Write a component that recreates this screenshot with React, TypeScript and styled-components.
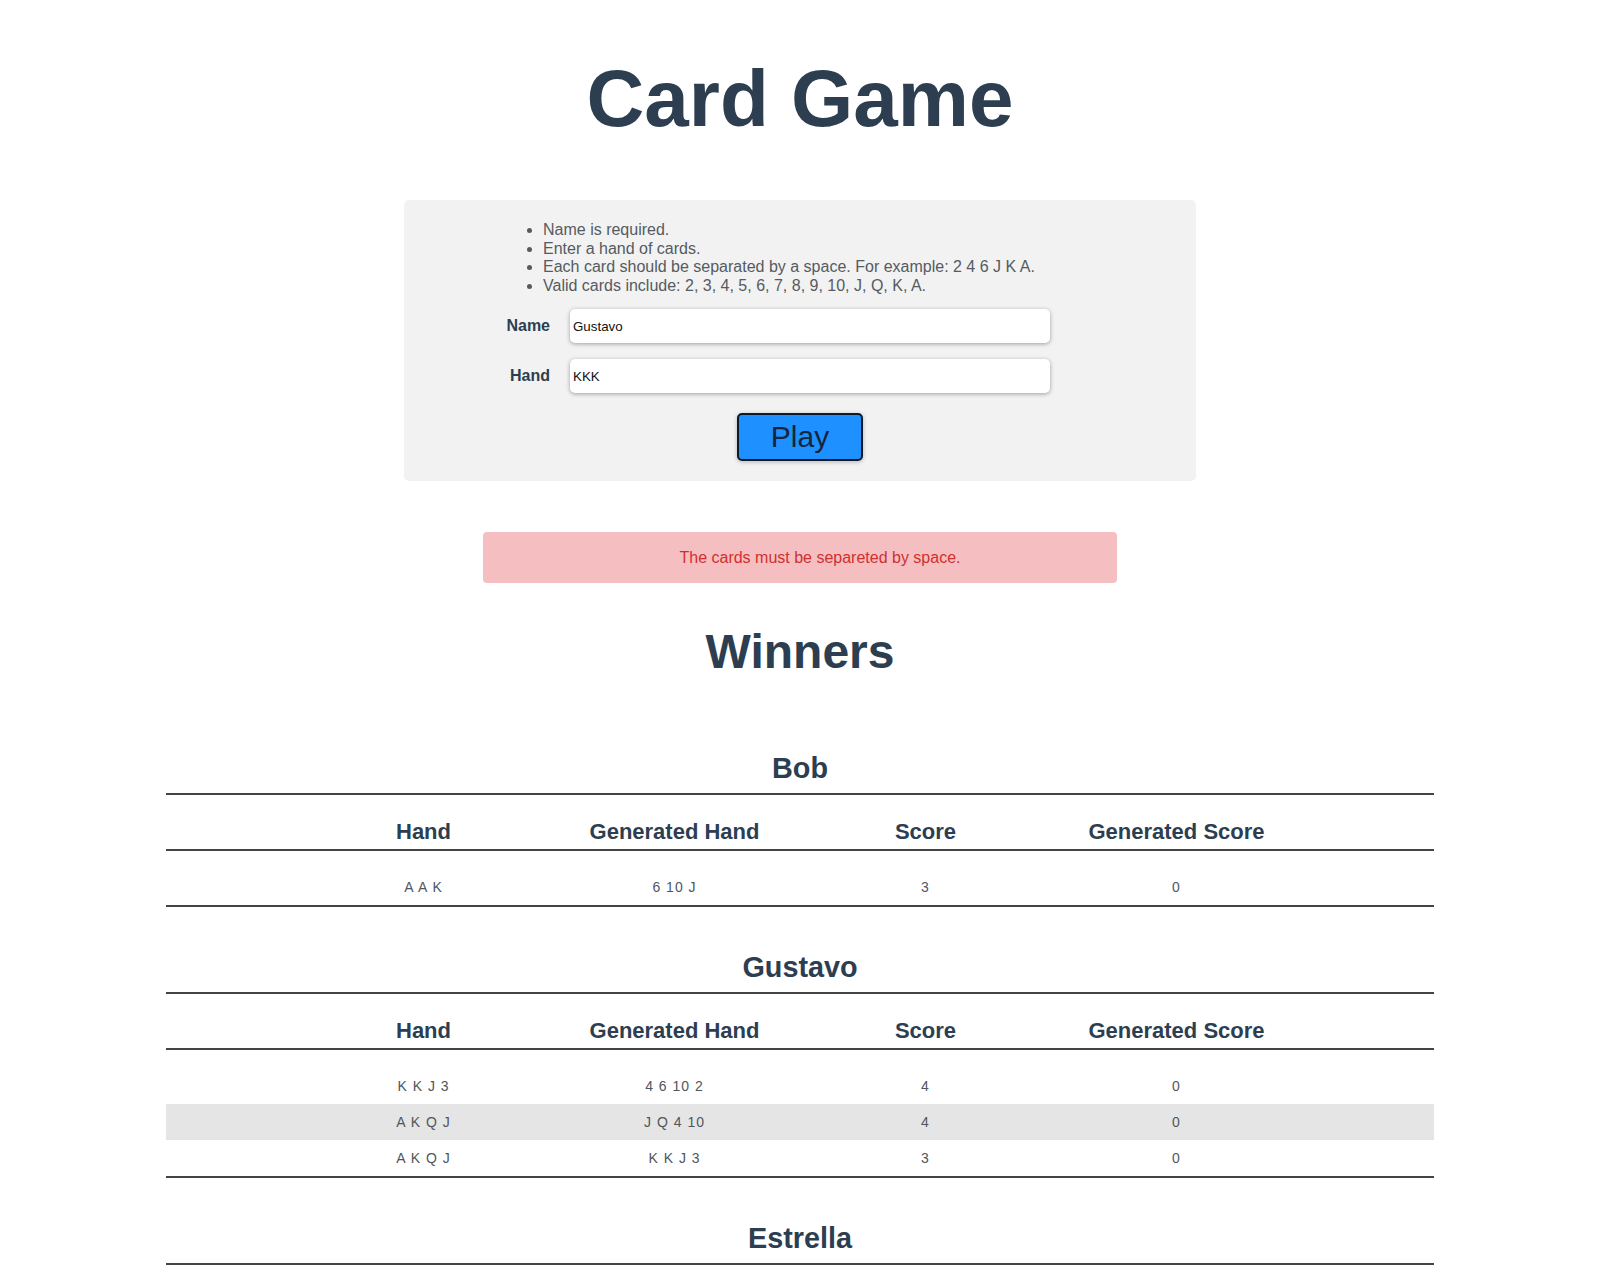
import React from "react";
import styled, { createGlobalStyle } from "styled-components";

const GlobalStyle = createGlobalStyle`
  html, body {
    margin: 0;
    padding: 0;
    background: #ffffff;
  }
  body {
    font-family: "Liberation Sans", Arial, Helvetica, sans-serif;
    color: #2c3e50;
    -webkit-font-smoothing: antialiased;
  }
`;

const Page = styled.div`
  display: flex;
  flex-direction: column;
  align-items: center;
  text-align: center;
  padding-bottom: 60px;
`;

const Title = styled.h1`
  margin: 53px 0 0;
  font-size: 80px;
  line-height: 92px;
  font-weight: 700;
  color: #2c3e50;
`;

const FormCard = styled.form`
  margin-top: 55px;
  width: 792px;
  box-sizing: border-box;
  padding: 21px 100px 20px;
  background: #f2f2f2;
  border-radius: 5px;
  display: flex;
  flex-direction: column;
  align-items: stretch;
  text-align: left;
`;

const Rules = styled.ul`
  margin: 0 0 14px;
  padding-left: 39px;
  color: #555b61;
  font-size: 16px;
`;

const Rule = styled.li`
  line-height: 18.5px;
`;

const Field = styled.div<{ $gapTop?: number }>`
  display: grid;
  grid-template-columns: 46px 480px;
  column-gap: 20px;
  align-items: center;
  margin-top: ${(p) => p.$gapTop ?? 0}px;
`;

const Label = styled.label`
  text-align: right;
  font-size: 16px;
  font-weight: 700;
  color: #2c3e50;
`;

const Input = styled.input`
  height: 34px;
  box-sizing: border-box;
  border: none;
  border-radius: 5px;
  background: #ffffff;
  box-shadow: 0 1px 4px rgba(0, 0, 0, 0.35);
  padding: 0 3px;
  font-family: "Liberation Sans", Arial, sans-serif;
  font-size: 13.33px;
  color: #111;
  outline: none;
`;

const PlayButton = styled.button`
  align-self: center;
  margin-top: 20px;
  height: 48px;
  box-sizing: border-box;
  padding: 0 32px;
  background: #1e90ff;
  border: 2px solid #0c1a2a;
  border-radius: 5px;
  box-shadow: 0 1px 4px rgba(0, 0, 0, 0.25);
  font-family: "Liberation Sans", Arial, sans-serif;
  font-size: 30px;
  line-height: 34px;
  color: #14263b;
  cursor: pointer;
`;

const ErrorBox = styled.div`
  margin-top: 51px;
  width: 634px;
  background: #f5bfc1;
  border-radius: 4px;
`;

const ErrorList = styled.ul`
  margin: 16px 0;
  padding-left: 40px;
  list-style: none;
`;

const ErrorItem = styled.li`
  font-size: 16px;
  line-height: 19px;
  color: #d0302f;
`;

const SectionTitle = styled.h1`
  margin: 41px 0 0;
  font-size: 48px;
  line-height: 55px;
  font-weight: 700;
  color: #2c3e50;
`;

const Player = styled.section<{ $first?: boolean }>`
  width: 1268px;
  display: flex;
  flex-direction: column;
  margin-top: ${(p) => (p.$first ? 73 : 44)}px;
`;

const PlayerName = styled.h2`
  margin: 0 0 8px;
  font-size: 28.8px;
  line-height: 33px;
  font-weight: 700;
  color: #2c3e50;
`;

const Table = styled.div`
  border-top: 2px solid #444;
  border-bottom: 2px solid #444;
`;

const HeadRow = styled.div`
  display: grid;
  grid-template-columns: repeat(4, 251px);
  justify-content: center;
  padding: 24px 0 5px;
  border-bottom: 2px solid #444;
`;

const HeadCell = styled.div`
  font-size: 22px;
  line-height: 25px;
  font-weight: 700;
  color: #2c3e50;
`;

const Body = styled.div`
  padding-top: 18px;
`;

const Row = styled.div`
  display: grid;
  grid-template-columns: repeat(4, 251px);
  justify-content: center;
  padding: 10px 0;
  &:nth-child(even) {
    background: #e5e5e5;
  }
`;

const Cell = styled.div`
  font-size: 14px;
  line-height: 16px;
  letter-spacing: 1px;
  color: #4f5660;
`;

type Game = { hand: string; generated: string; score: number; genScore: number };

const players: { name: string; games: Game[] }[] = [
  { name: "Bob", games: [{ hand: "A A K", generated: "6 10 J", score: 3, genScore: 0 }] },
  {
    name: "Gustavo",
    games: [
      { hand: "K K J 3", generated: "4 6 10 2", score: 4, genScore: 0 },
      { hand: "A K Q J", generated: "J Q 4 10", score: 4, genScore: 0 },
      { hand: "A K Q J", generated: "K K J 3", score: 3, genScore: 0 },
    ],
  },
  {
    name: "Estrella",
    games: [
      { hand: "Q Q 2", generated: "5 9 A", score: 2, genScore: 1 },
      { hand: "10 10 J", generated: "3 7 K", score: 2, genScore: 0 },
    ],
  },
];

export default function App() {
  return (
    <>
      <GlobalStyle />
      <Page>
        <Title>Card Game</Title>
        <FormCard onSubmit={(e) => e.preventDefault()}>
          <Rules>
            <Rule>Name is required.</Rule>
            <Rule>Enter a hand of cards.</Rule>
            <Rule>Each card should be separated by a space. For example: 2 4 6 J K A.</Rule>
            <Rule>Valid cards include: 2, 3, 4, 5, 6, 7, 8, 9, 10, J, Q, K, A.</Rule>
          </Rules>
          <Field>
            <Label htmlFor="name">Name</Label>
            <Input id="name" defaultValue="Gustavo" />
          </Field>
          <Field $gapTop={16}>
            <Label htmlFor="hand">Hand</Label>
            <Input id="hand" defaultValue="KKK" />
          </Field>
          <PlayButton type="submit">Play</PlayButton>
        </FormCard>
        <ErrorBox>
          <ErrorList>
            <ErrorItem>The cards must be separeted by space.</ErrorItem>
          </ErrorList>
        </ErrorBox>
        <SectionTitle>Winners</SectionTitle>
        {players.map((p, i) => (
          <Player key={p.name} $first={i === 0}>
            <PlayerName>{p.name}</PlayerName>
            <Table>
              <HeadRow>
                <HeadCell>Hand</HeadCell>
                <HeadCell>Generated Hand</HeadCell>
                <HeadCell>Score</HeadCell>
                <HeadCell>Generated Score</HeadCell>
              </HeadRow>
              <Body>
                {p.games.map((g, j) => (
                  <Row key={j}>
                    <Cell>{g.hand}</Cell>
                    <Cell>{g.generated}</Cell>
                    <Cell>{g.score}</Cell>
                    <Cell>{g.genScore}</Cell>
                  </Row>
                ))}
              </Body>
            </Table>
          </Player>
        ))}
      </Page>
    </>
  );
}
